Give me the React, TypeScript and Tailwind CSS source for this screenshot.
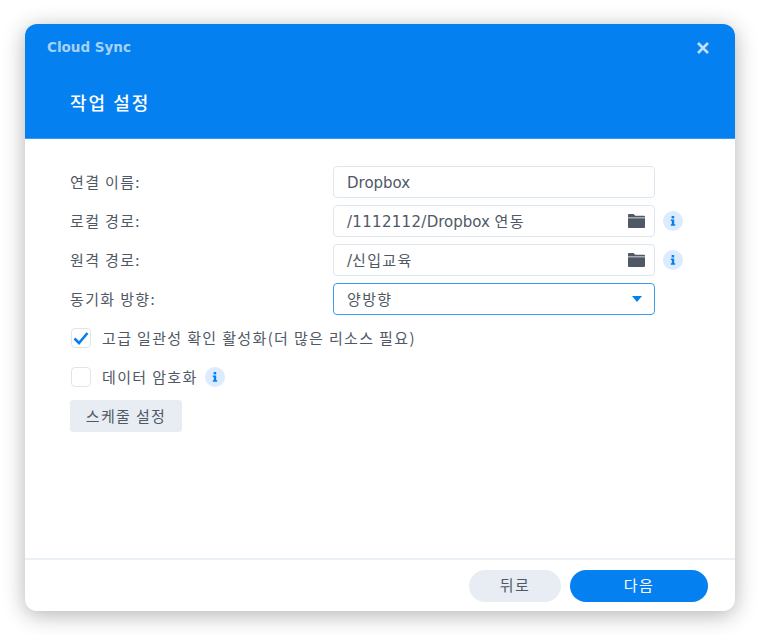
const font = "font-['DejaVu_Sans','Noto_Sans_CJK_KR',sans-serif]"
const korean = "text-[15px] tracking-[1.35px] text-[#4f5966] font-['Noto_Sans_CJK_KR',sans-serif]"

function InfoBadge() {
  return (
    <span className="flex h-5 w-5 shrink-0 items-center justify-center rounded-full bg-[#dcebfd]">
      <svg className="h-3 w-3" viewBox="0 0 12 12" fill="#0580f0">
        <rect x="4.6" y="1" width="2.6" height="2.4" />
        <path d="M3.8 4.6h3.4v4.6h1v1.5H3.8V9.2h1V6.1h-1z" />
      </svg>
    </span>
  )
}

function FolderIcon() {
  return (
    <svg className="h-[14px] w-[17px]" viewBox="0 0 17 14" fill="#4f5966">
      <path d="M0 1a1 1 0 0 1 1-1h4.6l1.6 1.7H16a1 1 0 0 1 1 1V3.4H0z" />
      <path d="M0 4.3h17V13a1 1 0 0 1-1 1H1a1 1 0 0 1-1-1z" />
    </svg>
  )
}

function Row({ label, children }: { label: string; children: React.ReactNode }) {
  return (
    <div className="flex h-8 items-center">
      <label className={`w-[263px] shrink-0 ${korean}`}>{label}</label>
      {children}
    </div>
  )
}

function PathField({ children }: { children: React.ReactNode }) {
  return (
    <>
      <div className="flex h-8 w-[322px] items-center justify-between rounded-[4px] border border-[#dfe5ed] bg-white pr-[9px] pl-[13px] text-[15px] text-[#4f5966]">
        <span className="pt-[2px]">{children}</span>
        <FolderIcon />
      </div>
      <span className="ml-[8px]">
        <InfoBadge />
      </span>
    </>
  )
}

export default function App() {
  return (
    <div className={`h-[635px] w-[760px] bg-white pt-[24px] pl-[25px] ${font}`}>
      <div className="flex h-[587px] w-[710px] flex-col overflow-hidden rounded-xl bg-white shadow-[0_4px_22px_rgba(0,0,0,0.3)]">
        <div className="h-[115px] shrink-0 border-b border-[#3b9bf5] bg-[#0580f0]">
          <div className="flex h-[46px] items-center justify-between pt-[1px] pr-[26px] pl-[22px]">
            <span className="text-[13.5px] font-bold text-[#a6d2fa]">Cloud Sync</span>
            <svg className="h-3 w-3" viewBox="0 0 12 12" stroke="#c2dffb" strokeWidth="2.6" fill="none">
              <path d="M1 1l10 10M11 1L1 11" />
            </svg>
          </div>
          <div className="mt-[20px] pl-[45px] font-['Noto_Sans_CJK_KR',sans-serif] text-[18px] leading-6 font-medium tracking-[2px] text-white">작업 설정</div>
        </div>

        <div className="flex flex-1 flex-col px-[45px] pt-[27px]">
          <div className="flex flex-col gap-[7px]">
            <Row label="연결 이름:">
              <div className="flex h-8 w-[322px] items-center rounded-[4px] border border-[#dfe5ed] bg-white pt-[2px] pl-[13px] text-[15px] text-[#4f5966]">
                Dropbox
              </div>
            </Row>
            <Row label="로컬 경로:">
              <PathField>
                <span className="tracking-[0.3px]">/1112112/</span>Dropbox <span className={korean}>연동</span>
              </PathField>
            </Row>
            <Row label="원격 경로:">
              <PathField>
                /<span className={korean}>신입교육</span>
              </PathField>
            </Row>
            <Row label="동기화 방향:">
              <div className="flex h-8 w-[322px] items-center justify-between rounded-[4px] border border-[#3d9bf3] bg-white pr-[12px] pl-[13px]">
                <span className={korean}>양방향</span>
                <svg className="h-[6px] w-[10px]" viewBox="0 0 10 6" fill="#0580f0">
                  <path d="M0 0h10L5 6z" />
                </svg>
              </div>
            </Row>
          </div>

          <div className="mt-[13px] flex h-5 items-center pl-px">
            <span className="flex h-5 w-5 items-center justify-center rounded-[4px] border border-[#dfe5ed]">
              <svg className="h-[14px] w-[16px]" viewBox="0 0 16 14" fill="none" stroke="#0580f0" strokeWidth="2.6">
                <path d="M1.5 7.5l4.5 4.5L14.5 2" />
              </svg>
            </span>
            <span className={`ml-[11px] ${korean}`}>고급 일관성 확인 활성화(더 많은 리소스 필요)</span>
          </div>

          <div className="mt-[19px] flex h-5 items-center pl-px">
            <span className="h-5 w-5 rounded-[4px] border border-[#dfe5ed]" />
            <span className={`ml-[11px] ${korean}`}>데이터 암호화</span>
            <span className="ml-[7px]">
              <InfoBadge />
            </span>
          </div>

          <button className={`mt-[13px] h-8 w-[112px] rounded-[3px] bg-[#e8edf4] ${korean}`}>스케줄 설정</button>
        </div>

        <div className="flex h-[53px] shrink-0 items-center justify-end gap-[9px] border-t-2 border-[#ebf0f6] pr-[27px]">
          <button className={`h-8 w-[92px] rounded-full bg-[#e8edf4] ${korean}`}>뒤로</button>
          <button className="h-8 w-[138px] rounded-full bg-[#0580f0] font-['Noto_Sans_CJK_KR',sans-serif] text-[15px] tracking-[1.35px] text-white">다음</button>
        </div>
      </div>
    </div>
  )
}
